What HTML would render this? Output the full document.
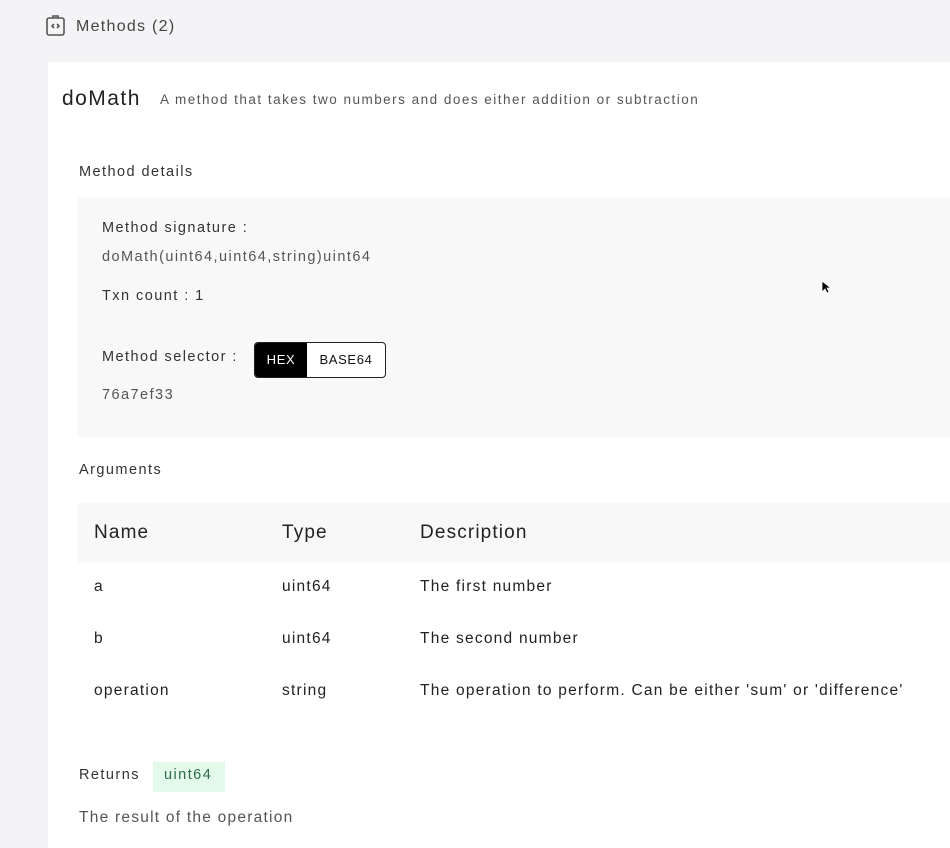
<!DOCTYPE html>
<html><head><style>
body{margin:0;width:950px;height:848px;background:#f4f4f6;font-family:"Liberation Sans",sans-serif;position:relative;overflow:hidden;color:#222}
.a{position:absolute;white-space:nowrap}
.s{font-size:14.5px;letter-spacing:.1em}
.m{font-size:15.5px;letter-spacing:.08em}
.h{font-size:19px;letter-spacing:.06em}
</style></head><body>
<svg class="a" style="left:45px;top:14px" width="22" height="24" viewBox="0 0 22 24" fill="none" stroke="#555" stroke-width="1.6"><rect x="2" y="4" width="17" height="17" rx="2"/><path d="M8 4V2h5v2"/><path d="M9 10l-2 2 2 2M12 10l2 2-2 2"/></svg>
<div class="a" style="left:76px;top:18px;font-size:16px;letter-spacing:.08em;color:#444">Methods (2)</div>
<div class="a" style="left:48px;top:62px;width:902px;height:786px;background:#fff"></div>
<div class="a" style="left:62px;top:87px;font-size:21px;letter-spacing:.07em;color:#222">doMath</div>
<div class="a" style="left:160px;top:92px;font-size:13.5px;letter-spacing:.11em;color:#555">A method that takes two numbers and does either addition or subtraction</div>
<div class="a s" style="left:79px;top:164px;color:#333">Method details</div>
<div class="a" style="left:78px;top:197px;width:872px;height:240px;background:#f8f8f9"></div>
<div class="a s" style="left:102px;top:220px;color:#333">Method signature :</div>
<div class="a s" style="left:102px;top:249px;color:#555">doMath(uint64,uint64,string)uint64</div>
<div class="a s" style="left:102px;top:288px;color:#333">Txn count : 1</div>
<div class="a s" style="left:102px;top:349px;color:#333">Method selector :</div>
<div class="a" style="left:254px;top:342px;width:130px;height:34px;border:1px solid #222;border-radius:4px;overflow:hidden;background:#fff">
<div class="a" style="left:0;top:0;width:52px;height:34px;background:#000;color:#fff;font-size:13px;letter-spacing:.05em;line-height:34px;text-align:center">HEX</div>
<div class="a" style="left:52px;top:0;width:78px;height:34px;color:#111;font-size:13px;letter-spacing:.05em;line-height:34px;text-align:center">BASE64</div></div>
<div class="a s" style="left:102px;top:387px;color:#555">76a7ef33</div>
<div class="a s" style="left:79px;top:462px;color:#333">Arguments</div>
<div class="a" style="left:78px;top:503px;width:872px;height:60px;background:#f8f8f9"></div>
<div class="a h" style="left:94px;top:522px">Name</div>
<div class="a h" style="left:282px;top:522px">Type</div>
<div class="a h" style="left:420px;top:522px">Description</div>
<div class="a m" style="left:94px;top:578px">a</div>
<div class="a m" style="left:282px;top:578px">uint64</div>
<div class="a m" style="left:420px;top:578px">The first number</div>
<div class="a m" style="left:94px;top:630px">b</div>
<div class="a m" style="left:282px;top:630px">uint64</div>
<div class="a m" style="left:420px;top:630px">The second number</div>
<div class="a m" style="left:94px;top:682px">operation</div>
<div class="a m" style="left:282px;top:682px">string</div>
<div class="a m" style="left:420px;top:682px">The operation to perform. Can be either 'sum' or 'difference'</div>
<div class="a s" style="left:79px;top:767px;color:#333">Returns</div>
<div class="a" style="left:153px;top:762px;width:72px;height:30px;background:#e3faea"></div>
<div class="a s" style="left:164px;top:767px;color:#2e6b45">uint64</div>
<div class="a m" style="left:79px;top:809px;color:#555">The result of the operation</div>
<svg class="a" style="left:821px;top:280px" width="10" height="14" viewBox="0 0 10 14"><path d="M1 1v11l3-3 2 4 2-1-2-4h4z" fill="#000" stroke="#fff" stroke-width=".8"/></svg>
</body></html>
